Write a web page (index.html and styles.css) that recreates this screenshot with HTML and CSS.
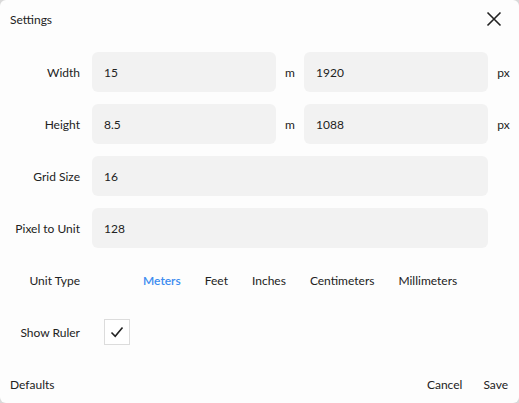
FILE: index.html
```html
<!DOCTYPE html>
<html>
<head>
<meta charset="utf-8">
<link rel="stylesheet" href="styles.css">
</head>
<body>
<div class="dialog">
  <div class="header">
    <span class="title">Settings</span>
    <svg class="close" width="16" height="16" viewBox="0 0 16 16"><path d="M1.5 1.5 L14.5 14.5 M14.5 1.5 L1.5 14.5" stroke="#222" stroke-width="1.6" fill="none"/></svg>
  </div>
  <div class="form">
    <div class="row">
      <label class="label">Width</label>
      <div class="input half">15</div>
      <span class="unit m">m</span>
      <div class="input half">1920</div>
      <span class="unit px">px</span>
    </div>
    <div class="row">
      <label class="label">Height</label>
      <div class="input half">8.5</div>
      <span class="unit m">m</span>
      <div class="input half">1088</div>
      <span class="unit px">px</span>
    </div>
    <div class="row">
      <label class="label">Grid Size</label>
      <div class="input full">16</div>
    </div>
    <div class="row">
      <label class="label">Pixel to Unit</label>
      <div class="input full">128</div>
    </div>
    <div class="row small">
      <label class="label">Unit Type</label>
      <div class="options">
        <span class="opt active">Meters</span>
        <span class="opt">Feet</span>
        <span class="opt">Inches</span>
        <span class="opt">Centimeters</span>
        <span class="opt">Millimeters</span>
      </div>
    </div>
    <div class="row small ruler">
      <label class="label">Show Ruler</label>
      <div class="checkbox">
        <svg width="16" height="16" viewBox="0 0 16 16"><path d="M2.5 8.5 L6.2 12.2 L13.5 3.5" stroke="#222" stroke-width="1.6" fill="none"/></svg>
      </div>
    </div>
  </div>
  <div class="footer">
    <span class="btn">Defaults</span>
    <div class="right">
      <span class="btn">Cancel</span>
      <span class="btn">Save</span>
    </div>
  </div>
</div>
</body>
</html>
```
FILE: styles.css
```css
html, body {
  margin: 0;
  padding: 0;
  background: #d9d9d9;
}
body {
  font-family: "Lato", "Noto Sans", sans-serif;
  font-size: 12px;
  color: #222;
}
.dialog {
  width: 519px;
  height: 403px;
  background: #fdfdfd;
  border-radius: 6px;
  display: flex;
  flex-direction: column;
  box-sizing: border-box;
}
.header {
  height: 38px;
  display: flex;
  align-items: center;
  justify-content: space-between;
  padding: 0 17px 0 10px;
}
.title {
  font-size: 12px;
}
.close {
  display: block;
}
.form {
  padding-top: 14px;
  display: flex;
  flex-direction: column;
  gap: 12px;
  flex: 1;
}
.row {
  display: flex;
  align-items: center;
  height: 40px;
}
.row.small {
  height: 40px;
}
.row.ruler {
  margin-top: 0;
}
.label {
  width: 80px;
  margin-right: 12px;
  text-align: right;
}
.input {
  height: 40px;
  background: #f2f2f2;
  border-radius: 6px;
  display: flex;
  align-items: center;
  padding-left: 12px;
  box-sizing: border-box;
}
.input.half {
  width: 184px;
}
.input.full {
  width: 396px;
}
.unit {
  text-align: center;
}
.unit.m {
  width: 28px;
}
.unit.px {
  width: 31px;
}
.options {
  display: flex;
  gap: 24px;
  margin-left: 51px;
}
.opt.active {
  color: #3c8cf0;
  font-weight: 600;
}
.checkbox {
  width: 26px;
  height: 26px;
  border: 1px solid #dcdcdc;
  box-sizing: border-box;
  margin-left: 12px;
  display: flex;
  align-items: center;
  justify-content: center;
  background: #fff;
}
.footer {
  height: 38px;
  display: flex;
  align-items: center;
  justify-content: space-between;
  padding: 0 11px 0 10px;
  margin-bottom: 0;
}
.right {
  display: flex;
  gap: 21px;
}
```
